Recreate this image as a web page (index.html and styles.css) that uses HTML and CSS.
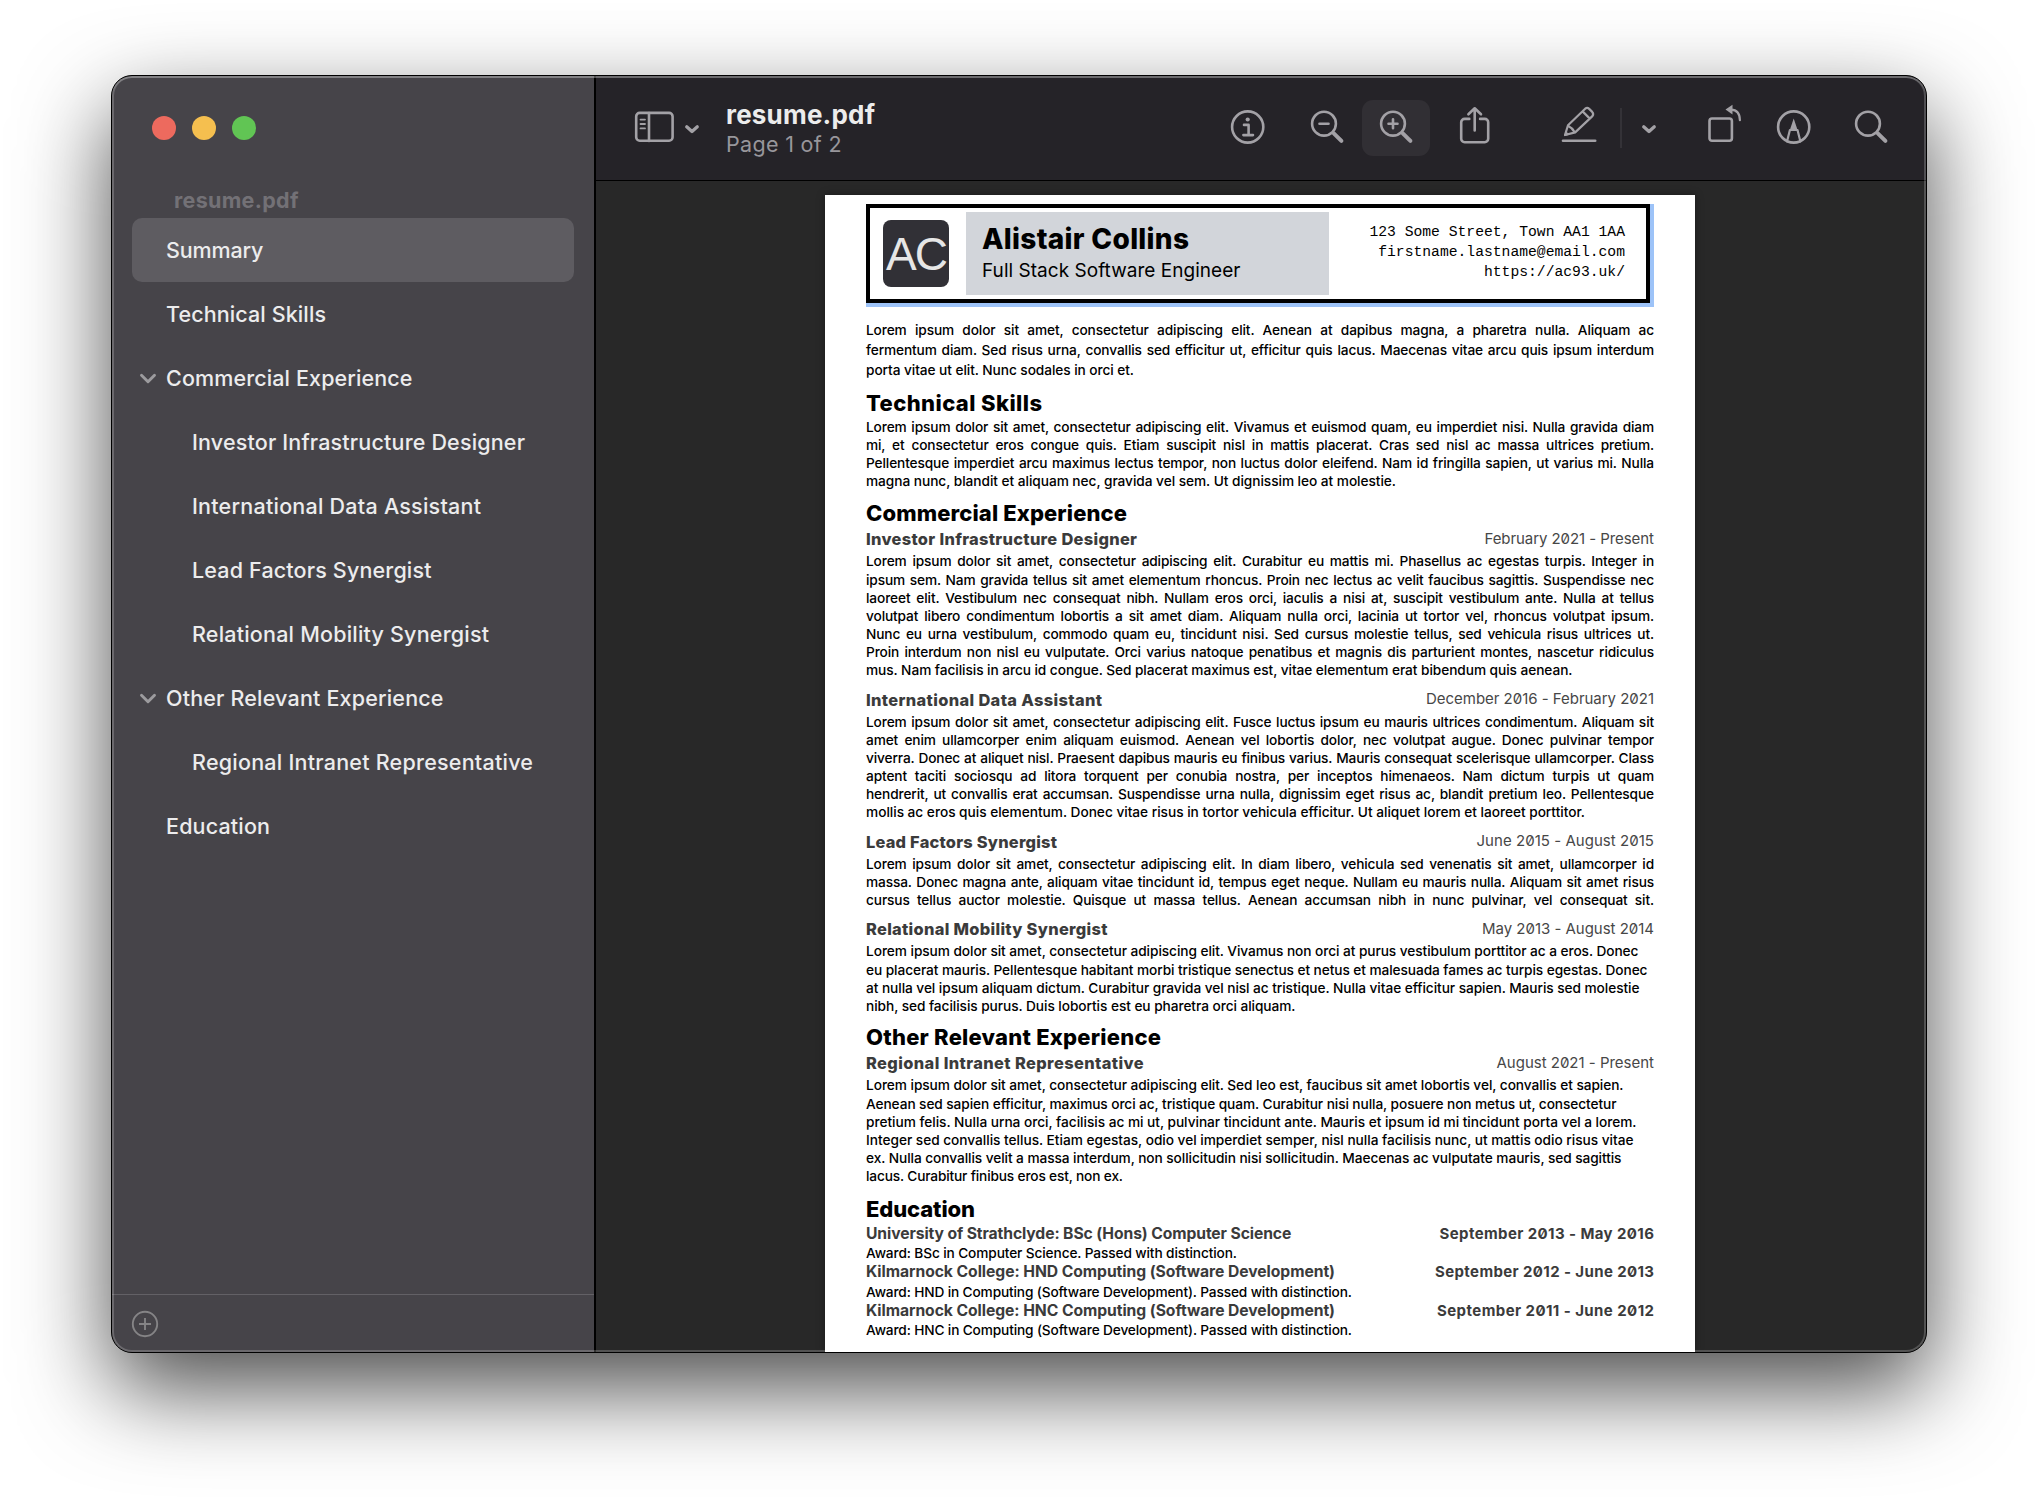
FILE: index.html
```html
<!DOCTYPE html>
<html lang="en">
<head>
<meta charset="utf-8">
<title>resume.pdf</title>
<link rel="stylesheet" href="styles.css">
</head>
<body>
<div class="window">
  <aside class="sidebar">
    <div class="lights"><i class="light close"></i><i class="light minimise"></i><i class="light full"></i></div>
    <div class="outline-title"><span data-w="124.5">resume.pdf</span></div>
    <nav class="outline">
      <div class="row selected"><span data-w="97.500">Summary</span></div>
      <div class="row"><span data-w="160">Technical Skills</span></div>
      <div class="row group"><svg class="twisty" viewBox="0 0 18 12"><path d="M2.5 2.2 9 8.8l6.500-6.600"/></svg><span data-w="246.5">Commercial Experience</span></div>
      <div class="row child"><span data-w="333">Investor Infrastructure Designer</span></div>
      <div class="row child"><span data-w="289">International Data Assistant</span></div>
      <div class="row child"><span data-w="239.500">Lead Factors Synergist</span></div>
      <div class="row child"><span data-w="297">Relational Mobility Synergist</span></div>
      <div class="row group"><svg class="twisty" viewBox="0 0 18 12"><path d="M2.5 2.2 9 8.8l6.500-6.600"/></svg><span data-w="277.500">Other Relevant Experience</span></div>
      <div class="row child"><span data-w="341">Regional Intranet Representative</span></div>
      <div class="row"><span data-w="104">Education</span></div>
    </nav>
    <div class="sidebar-foot">
      <svg class="add" viewBox="0 0 28 28"><circle cx="14" cy="14" r="12.200"/><path d="M14 8v12M8 14h12"/></svg>
    </div>
  </aside>
  <main class="main">
    <header class="toolbar">
      <svg class="icon" width="44" height="56" viewBox="0 0 44 56"><rect x="3.200" y="12.900" width="36.400" height="27.800" rx="3.500"/><path d="M16 13v28"/><path class="fine" d="M7.500 19.600h4.500M7.500 24h4.500M7.500 28.400h4.500"/></svg>
      <svg class="icon chev" width="18" height="56" viewBox="0 0 18 56"><path d="M3.700 26.700 9 31.500l5.300-4.800"/></svg>
      <div class="doc">
        <div class="doc-name"><span data-w="149">resume.pdf</span></div>
        <div class="doc-page"><span data-w="115.500">Page 1 of 2</span></div>
      </div>
      <svg class="icon info" width="36" height="56" viewBox="0 0 36 56"><circle cx="17.700" cy="27" r="15.600"/><circle class="solid" cx="17.700" cy="19.500" r="2.100"/><path d="M14 24.900h4.600v10.200M13.400 35.100h9.600"/></svg>
      <svg class="icon out" width="38" height="56" viewBox="0 0 38 56"><circle cx="16" cy="23.700" r="11.900"/><path d="M11.500 23.700h9"/><path class="handle" d="m25.800 33.300 7.600 7.600"/></svg>
      <div class="in">
        <svg class="icon" width="68" height="56" viewBox="0 0 68 56"><circle cx="31" cy="23.700" r="11.900"/><path d="M26.500 23.700h9M31 19.200v9"/><path class="handle" d="m40.800 33.300 7.600 7.600"/></svg>
      </div>
      <svg class="icon share" width="34" height="56" viewBox="0 0 34 56"><path d="M12.300 18.900H7.600a3.400 3.400 0 0 0-3.400 3.400v16.500a3.400 3.400 0 0 0 3.400 3.400h20.200a3.400 3.400 0 0 0 3.400-3.400V22.300a3.400 3.400 0 0 0-3.400-3.400h-4.700M17.700 30.500V8.500M11.400 14.300l6.300-6 6.300 6"/></svg>
      <svg class="icon pencil" width="38" height="56" viewBox="0 0 38 56"><path d="M3 40.800h32.200"/><path class="mid" d="M5 35 8 25.200 25.200 8.700q2.100-1.600 4 .2l3 3q1.800 2 .2 4.200L15.200 32.400ZM8.300 26q4.300 2 6.300 6.200M22.600 11.400l7.200 7.200"/><path class="solid" d="m3.800 36.200 2.200-5 3.600 3.600Z"/></svg>
      <i class="divider"></i>
      <svg class="icon chev menu" width="18" height="56" viewBox="0 0 18 56"><path d="M3.700 26.700 9 31.500l5.300-4.800"/></svg>
      <svg class="icon rotate" width="38" height="56" viewBox="0 0 38 56"><rect x="4.500" y="18.500" width="22.400" height="22.300" rx="2.500"/><path class="mid" d="M26 9.700q8.700.2 8.900 10.500"/><path class="solid" d="m20.500 9.600 7-4.900v9.800Z"/></svg>
      <svg class="icon pen" width="38" height="56" viewBox="0 0 38 56"><circle cx="18.700" cy="27" r="15.600"/><path class="mid" d="M12 41.500 14.900 30h7.600l2.900 11.500"/><path class="solid" d="M18.700 18.500 22.900 31h-8.400Z"/></svg>
      <svg class="icon search" width="38" height="56" viewBox="0 0 38 56"><circle cx="16" cy="23.700" r="11.900"/><path class="handle" d="m25.800 33.300 7.600 7.600"/></svg>
    </header>
    <div class="viewer">
      <article class="page">
        <div class="card">
          <div class="logo"><span>AC</span></div>
          <div class="who">
            <div class="name"><span data-w="207">Alistair Collins</span></div>
            <div class="role"><span data-w="258.500">Full Stack Software Engineer</span></div>
          </div>
          <div class="contact">
            <div>123 Some Street, Town AA1 1AA</div>
            <div>firstname.lastname@email.com</div>
            <div>https://ac93.uk/</div>
          </div>
        </div>

        <div class="text intro">
          <p>Lorem ipsum dolor sit amet, consectetur adipiscing elit. Aenean at dapibus magna, a pharetra nulla. Aliquam ac</p>
          <p>fermentum diam. Sed risus urna, convallis sed efficitur ut, efficitur quis lacus. Maecenas vitae arcu quis ipsum interdum</p>
          <p><span data-w="268">porta vitae ut elit. Nunc sodales in orci et.</span></p>
        </div>

        <h2 class="h-skills"><span data-w="176">Technical Skills</span></h2>
        <div class="text t-skills">
          <p>Lorem ipsum dolor sit amet, consectetur adipiscing elit. Vivamus et euismod quam, eu imperdiet nisi. Nulla gravida diam</p>
          <p>mi, et consectetur eros congue quis. Etiam suscipit nisl in mattis placerat. Cras sed nisl ac massa ultrices pretium.</p>
          <p>Pellentesque imperdiet arcu maximus lectus tempor, non luctus dolor eleifend. Nam id fringilla sapien, ut varius mi. Nulla</p>
          <p><span data-w="530">magna nunc, blandit et aliquam nec, gravida vel sem. Ut dignissim leo at molestie.</span></p>
        </div>

        <h2 class="h-commercial"><span data-w="261">Commercial Experience</span></h2>
        <div class="entry e-investor"><h3><span data-w="271">Investor Infrastructure Designer</span></h3><time><span data-w="169.500">February 2021 - Present</span></time></div>
        <div class="text t-investor">
          <p>Lorem ipsum dolor sit amet, consectetur adipiscing elit. Curabitur eu mattis mi. Phasellus ac egestas turpis. Integer in</p>
          <p>ipsum sem. Nam gravida tellus sit amet elementum rhoncus. Proin nec lectus ac velit faucibus sagittis. Suspendisse nec</p>
          <p>laoreet elit. Vestibulum nec consequat nibh. Nullam eros orci, iaculis a nisi at, suscipit vestibulum ante. Nulla at tellus</p>
          <p>volutpat libero condimentum lobortis a sit amet diam. Aliquam nulla orci, lacinia ut tortor vel, rhoncus volutpat ipsum.</p>
          <p>Nunc eu urna vestibulum, commodo quam eu, tincidunt nisi. Sed cursus molestie tellus, sed vehicula risus ultrices ut.</p>
          <p>Proin interdum non nisl eu vulputate. Orci varius natoque penatibus et magnis dis parturient montes, nascetur ridiculus</p>
          <p><span data-w="706.500">mus. Nam facilisis in arcu id congue. Sed placerat maximus est, vitae elementum erat bibendum quis aenean.</span></p>
        </div>

        <div class="entry raised e-data"><h3><span data-w="236">International Data Assistant</span></h3><time><span data-w="228">December 2016 - February 2021</span></time></div>
        <div class="text t-data">
          <p>Lorem ipsum dolor sit amet, consectetur adipiscing elit. Fusce luctus ipsum eu mauris ultrices condimentum. Aliquam sit</p>
          <p>amet enim ullamcorper enim aliquam euismod. Aenean vel lobortis dolor, nec volutpat augue. Donec pulvinar tempor</p>
          <p>viverra. Donec at aliquet nisl. Praesent dapibus mauris eu finibus varius. Mauris consequat scelerisque ullamcorper. Class</p>
          <p>aptent taciti sociosqu ad litora torquent per conubia nostra, per inceptos himenaeos. Nam dictum turpis ut quam</p>
          <p>hendrerit, ut convallis erat accumsan. Suspendisse urna nulla, dignissim eget risus ac, blandit pretium leo. Pellentesque</p>
          <p><span data-w="719">mollis ac eros quis elementum. Donec vitae risus in tortor vehicula efficitur. Ut aliquet lorem et laoreet porttitor.</span></p>
        </div>

        <div class="entry raised e-lead"><h3><span data-w="191">Lead Factors Synergist</span></h3><time><span data-w="177.500">June 2015 - August 2015</span></time></div>
        <div class="text t-lead">
          <p>Lorem ipsum dolor sit amet, consectetur adipiscing elit. In diam libero, vehicula sed venenatis sit amet, ullamcorper id</p>
          <p>massa. Donec magna ante, aliquam vitae tincidunt id, tempus eget neque. Nullam eu mauris nulla. Aliquam sit amet risus</p>
          <p>cursus tellus auctor molestie. Quisque ut massa tellus. Aenean accumsan nibh in nunc pulvinar, vel consequat sit.</p>
        </div>

        <div class="entry e-mobility"><h3><span data-w="241.500">Relational Mobility Synergist</span></h3><time><span data-w="172">May 2013 - August 2014</span></time></div>
        <div class="text t-mobility">
          <p><span data-w="772.500">Lorem ipsum dolor sit amet, consectetur adipiscing elit. Vivamus non orci at purus vestibulum porttitor ac a eros. Donec</span></p>
          <p><span data-w="781.500">eu placerat mauris. Pellentesque habitant morbi tristique senectus et netus et malesuada fames ac turpis egestas. Donec</span></p>
          <p><span data-w="773.500">at nulla vel ipsum aliquam dictum. Curabitur gravida vel nisl ac tristique. Nulla vitae efficitur sapien. Mauris sed molestie</span></p>
          <p><span data-w="429.500">nibh, sed facilisis purus. Duis lobortis est eu pharetra orci aliquam.</span></p>
        </div>

        <h2 class="h-other"><span data-w="295">Other Relevant Experience</span></h2>
        <div class="entry e-regional"><h3><span data-w="277.500">Regional Intranet Representative</span></h3><time><span data-w="157.500">August 2021 - Present</span></time></div>
        <div class="text t-regional">
          <p><span data-w="757.500">Lorem ipsum dolor sit amet, consectetur adipiscing elit. Sed leo est, faucibus sit amet lobortis vel, convallis et sapien.</span></p>
          <p><span data-w="750.500">Aenean sed sapien efficitur, maximus orci ac, tristique quam. Curabitur nisi nulla, posuere non metus ut, consectetur</span></p>
          <p><span data-w="770.500">pretium felis. Nulla urna orci, facilisis ac mi ut, pulvinar tincidunt ante. Mauris et ipsum id mi tincidunt porta vel a lorem.</span></p>
          <p><span data-w="767.500">Integer sed convallis tellus. Etiam egestas, odio vel imperdiet semper, nisl nulla facilisis nunc, ut mattis odio risus vitae</span></p>
          <p><span data-w="755.500">ex. Nulla convallis velit a massa interdum, non sollicitudin nisi sollicitudin. Maecenas ac vulputate mauris, sed sagittis</span></p>
          <p><span data-w="257">lacus. Curabitur finibus eros est, non ex.</span></p>
        </div>

        <h2 class="h-education"><span data-w="109">Education</span></h2>
        <div class="degrees">
          <div class="entry"><h3><span data-w="425">University of Strathclyde: BSc (Hons) Computer Science</span></h3><time><span data-w="214.500">September 2013 - May 2016</span></time></div>
          <p><span data-w="371">Award: BSc in Computer Science. Passed with distinction.</span></p>
          <div class="entry"><h3><span data-w="469">Kilmarnock College: HND Computing (Software Development)</span></h3><time><span data-w="219">September 2012 - June 2013</span></time></div>
          <p><span data-w="486">Award: HND in Computing (Software Development). Passed with distinction.</span></p>
          <div class="entry"><h3><span data-w="469">Kilmarnock College: HNC Computing (Software Development)</span></h3><time><span data-w="217">September 2011 - June 2012</span></time></div>
          <p><span data-w="486">Award: HNC in Computing (Software Development). Passed with distinction.</span></p>
        </div>
      </article>
    </div>
  </main>
</div>
<script src="fit.js"></script>
</body>
</html>
```
FILE: styles.css
```css
* { box-sizing: border-box; }

body {
  margin: 0;
  width: 2038px;
  height: 1500px;
  padding: 75px 111px 0;
  overflow: hidden;
  background: #fff;
  font-family: Inter, "Liberation Sans", sans-serif;
}

span { white-space: nowrap; }

/* Window frame */
.window {
  position: relative;
  display: flex;
  width: 1816px;
  height: 1278px;
  border: 1px solid #000;
  border-radius: 21px;
  overflow: hidden;
  background: #282828;
  box-shadow: 0 36px 90px rgba(0, 0, 0, .7);
}

.window::after {
  content: "";
  position: absolute;
  inset: 0;
  border-radius: 20px;
  box-shadow: inset 0 0 0 2px rgba(255, 255, 255, .2), inset 0 2px 0 rgba(255, 255, 255, .16);
  pointer-events: none;
}

/* Sidebar */
.sidebar {
  display: flex;
  flex-direction: column;
  width: 484px;
  border-right: 2px solid #000;
  background: #464449;
  color: #ececed;
}

.lights {
  display: flex;
  gap: 16px;
  padding: 40px 0 0 40px;
}

.light {
  width: 24px;
  height: 24px;
  border-radius: 50%;
}

.close { background: #ed6a5e; }
.minimise { background: #f5bf4f; }
.full { background: #61c554; }

.outline-title {
  margin-top: 44px;
  padding: 0 0 2px 62px;
  font-size: 21.500px;
  line-height: 32px;
  font-weight: 650;
  color: #737176;
}

.outline {
  flex: 1;
  padding: 0 20px;
}

.row {
  display: flex;
  align-items: center;
  height: 64px;
  padding-left: 34px;
  font-size: 21.500px;
  font-weight: 500;
}

.selected {
  border-radius: 10px;
  background: #5e5c61;
}

.group { padding-left: 7px; }
.child { padding-left: 60px; }

.twisty {
  width: 18px;
  height: 12px;
  margin: 1px 9px 0 0;
  fill: none;
  stroke: #9c9b9e;
  stroke-width: 2.900;
  stroke-linecap: round;
  stroke-linejoin: round;
}

.sidebar-foot {
  height: 58px;
  padding: 15px 0 0 19px;
  border-top: 1px solid #636166;
}

.add {
  display: block;
  width: 28px;
  height: 28px;
  fill: none;
  stroke: #858486;
  stroke-width: 1.900;
}

/* Toolbar */
.main {
  display: flex;
  flex: 1;
  flex-direction: column;
}

.toolbar {
  display: flex;
  align-items: center;
  height: 105px;
  padding: 0 36px 0 37px;
  border-bottom: 1px solid #000;
  background: #252328;
}

.icon {
  display: block;
  flex: none;
  fill: none;
  stroke: #a3a1a6;
  stroke-width: 2.600;
  stroke-linecap: round;
  stroke-linejoin: round;
}

.icon .fine { stroke-width: 1.800; }
.icon .mid { stroke-width: 2.200; }
.icon .handle { stroke-width: 4; }
.icon .solid { fill: #a3a1a6; stroke: none; }

.chev {
  margin-left: 6px;
  stroke-width: 3.200;
}

.doc {
  margin-left: 25px;
  padding-top: 2px;
}

.doc-name {
  font-size: 26px;
  line-height: 30px;
  font-weight: 700;
  color: #ececec;
}

.doc-page {
  font-size: 21.500px;
  line-height: 29px;
  color: #98969b;
}

.info { margin-left: auto; }
.out { margin-left: 42px; }

.in {
  margin-left: 16px;
  border-radius: 11px;
  background: #312f34;
}

.share { margin-left: 27px; }
.pencil { margin-left: 69px; }

.divider {
  width: 2px;
  height: 40px;
  margin-left: 22px;
  background: #343237;
}

.menu { margin-left: 18px; }
.rotate { margin-left: 47px; }
.pen { margin-left: 32px; }
.search { margin-left: 39px; }

/* PDF page */
.viewer {
  display: flex;
  flex: 1;
  padding: 14px 0 0 229px;
  background: #282828;
}

.page {
  width: 870px;
  padding: 9px 41px 0;
  background: #fff;
  box-shadow: 0 0 8px rgba(0, 0, 0, .35);
  color: #000;
}

.card {
  display: flex;
  width: 784px;
  height: 99px;
  padding: 4px 21px 4px 13px;
  border: 4px solid #000;
  box-shadow: 4px 0 #9dc3f8, 0 4px #9dc3f8, 4px 4px #9dc3f8;
}

.logo {
  display: flex;
  align-items: center;
  justify-content: center;
  width: 66px;
  height: 67px;
  margin-top: 8px;
  border-radius: 8px;
  background: #313036;
  color: #e6e6e6;
  font-family: "Liberation Sans", sans-serif;
  font-size: 46px;
  font-weight: 400;
  letter-spacing: -2px;
}

.who {
  width: 363px;
  margin-left: 17px;
  padding: 7px 0 0 16px;
  background: #d2d5da;
}

.name {
  font-size: 28px;
  line-height: 40px;
  font-weight: 800;
}

.role {
  font-size: 19px;
  line-height: 23px;
}

.contact {
  flex: 1;
  padding-top: 10px;
  font-family: "Liberation Mono", monospace;
  font-size: 14.700px;
  line-height: 20px;
  text-align: right;
  white-space: nowrap;
}

h2, h3, p { margin: 0; }

.text p, .degrees p {
  font-size: 13.700px;
  line-height: 18.200px;
  height: 18.200px;
  font-weight: 480;
  letter-spacing: -.12px;
  white-space: nowrap;
  text-align: justify;
  text-align-last: justify;
}

.text span, .degrees span { display: inline-block; text-align-last: left; }
.text p:has(span), .degrees p { text-align-last: left; }

.intro { margin-top: 17px; }

.intro p {
  height: 20px;
  line-height: 20px;
}

h2 {
  font-size: 22px;
  line-height: 24px;
  font-weight: 800;
}

.entry {
  display: flex;
  justify-content: space-between;
  height: 20px;
  font-size: 15px;
  line-height: 20px;
  color: #3b3b3b;
}

h3 {
  font-size: 16.400px;
  font-weight: 800;
}

.degrees h3 {
  font-size: 15.700px;
  font-weight: 750;
}

time {
  font-size: 15px;
  color: #474747;
  font-variant-numeric: slashed-zero;
}

.raised time { line-height: 18px; }

.h-skills { margin-top: 11px; }
.t-skills { margin-top: 2.800px; }
.h-commercial { margin-top: 10.500px; }
.e-investor { margin-top: 3.900px; }
.t-investor { margin-top: 3.400px; }
.e-data { margin-top: 9.900px; }
.t-data { margin-top: 3px; }
.e-lead { margin-top: 10px; }
.t-lead { margin-top: 3.100px; }
.e-mobility { margin-top: 9.500px; }
.t-mobility { margin-top: 3.500px; }
.h-other { margin-top: 10.200px; }
.e-regional { margin-top: 3.800px; }
.t-regional { margin-top: 3.400px; }
.h-education { margin-top: 11.900px; }

.degrees { margin-top: 2.500px; }
.degrees .entry { height: 20.300px; }

.degrees time {
  font-weight: 750;
  color: #3b3b3b;
}
```
FILE: fit.js
```js
// Tracks each label so that it fills its set measure.
document.querySelectorAll("[data-w]").forEach(function (el) {
  el.style.display = "inline-block";
  el.style.letterSpacing = "0px";
  var n = el.textContent.length;
  var gap = (parseFloat(el.dataset.w) - el.getBoundingClientRect().width) / (n - 1);
  el.style.letterSpacing = gap + "px";
  el.style.marginRight = -gap + "px";
});
```
